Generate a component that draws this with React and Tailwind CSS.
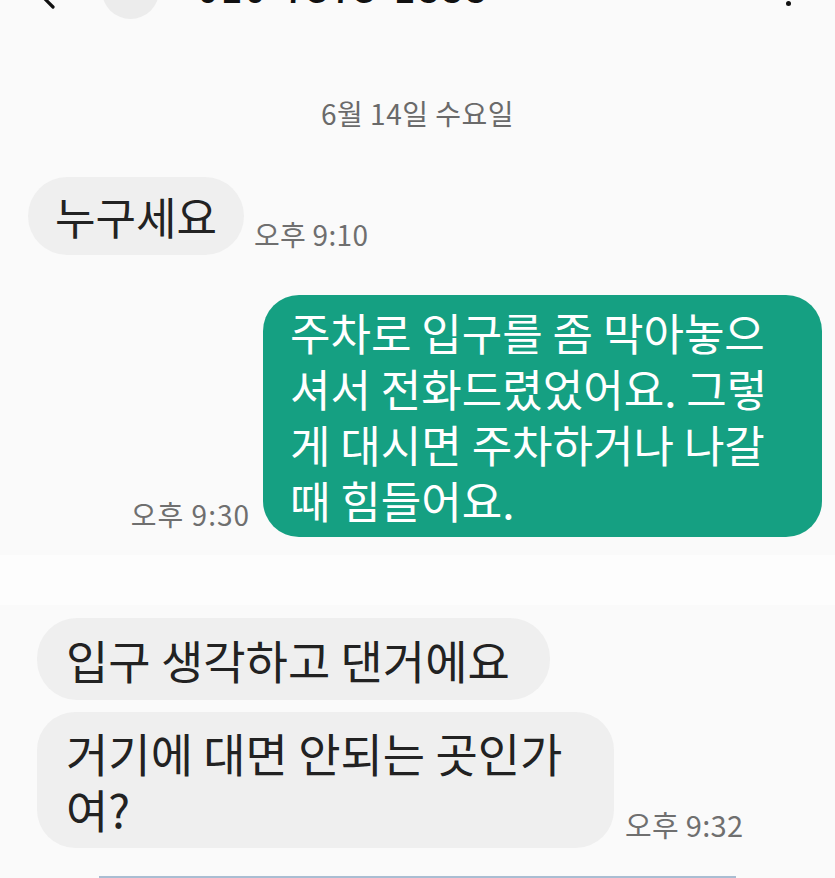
import React from "react";

const FONT = { fontFamily: '"Noto Sans CJK KR", "Noto Sans", sans-serif' };

function Time({ children, className = "" }) {
  return (
    <span className={`text-[28px] leading-[32px] tracking-[0.3px] text-[#6f6f6f] whitespace-nowrap ${className}`}>
      {children}
    </span>
  );
}

export default function App() {
  return (
    <div className="w-[835px] h-[878px] overflow-hidden bg-[#fdfdfd] flex flex-col" style={FONT}>
      {/* top screenshot */}
      <section className="h-[555px] bg-[#fafafa] flex flex-col shrink-0 overflow-hidden">
        {/* header cut off at top */}
        <div className="h-[60px] -mt-[40px] flex items-center shrink-0">
          <svg className="ml-[32px] w-[24px] h-[40px]" viewBox="0 0 24 40" fill="none">
            <path d="M21 3 L4 20 L21 37" stroke="#111" strokeWidth="3.2" strokeLinecap="round" strokeLinejoin="round" />
          </svg>
          <div className="ml-[46px] w-[57px] h-[57px] rounded-full bg-[#ececec]" />
          <span className="ml-[38px] text-[38px] font-medium leading-[44px] text-[#111] tracking-[2px] -translate-y-[3px]">
            010-7373-1888
          </span>
          <div className="ml-auto mr-[44px] flex flex-col gap-[5px] mt-[6px]">
            <span className="w-[5px] h-[5px] rounded-full bg-[#111]" />
            <span className="w-[5px] h-[5px] rounded-full bg-[#111]" />
            <span className="w-[5px] h-[5px] rounded-full bg-[#111]" />
          </div>
        </div>

        {/* date */}
        <div className="mt-[75px] text-center text-[28px] leading-[36px] tracking-[0.5px] text-[#6a6a6a]">
          6월 14일 수요일
        </div>

        {/* incoming */}
        <div className="mt-[46px] pl-[28px] flex items-end">
          <div className="bg-[#efefef] rounded-[39px] px-[27px] py-[10px] text-[44px] leading-[58px] text-[#222]">
            누구세요
          </div>
          <Time className="ml-[10px] mb-[5px]">오후 9:10</Time>
        </div>

        {/* outgoing */}
        <div className="mt-[40px] pr-[13px] flex items-end justify-end">
          <Time className="mr-[13px] mb-[7px] tracking-[1px]">오후 9:30</Time>
          <div className="w-[559px] bg-[#15a082] rounded-[36px] pl-[27px] py-[9px] text-[44px] leading-[56px] text-white">
            <div className="whitespace-nowrap">주차로 입구를 좀 막아놓으</div>
            <div className="whitespace-nowrap">셔서 전화드렸었어요. 그렇</div>
            <div className="whitespace-nowrap">게 대시면 주차하거나 나갈</div>
            <div className="whitespace-nowrap">때 힘들어요.</div>
          </div>
        </div>
      </section>

      {/* bottom screenshot */}
      <section className="mt-[50px] flex-1 bg-[#fafafa] flex flex-col pt-[13px]">
        <div className="pl-[37px]">
          <div className="w-[513px] bg-[#efefef] rounded-[40px] px-[29px] py-[13px] text-[46px] leading-[56px] text-[#222] whitespace-nowrap">
            입구 생각하고 댄거에요
          </div>
        </div>
        <div className="mt-[12px] pl-[37px] flex items-end">
          <div className="w-[577px] bg-[#efefef] rounded-[38px] px-[29px] py-[12px] text-[46px] leading-[56px] text-[#222]">
            <div className="whitespace-nowrap">거기에 대면 안되는 곳인가</div>
            <div className="whitespace-nowrap">여?</div>
          </div>
          <Time className="ml-[11px] mb-[8px] text-[29px]">오후 9:32</Time>
        </div>
        <div className="mt-auto ml-[99px] w-[637px] h-[2px] bg-[#a9bdd2]" />
      </section>
    </div>
  );
}
